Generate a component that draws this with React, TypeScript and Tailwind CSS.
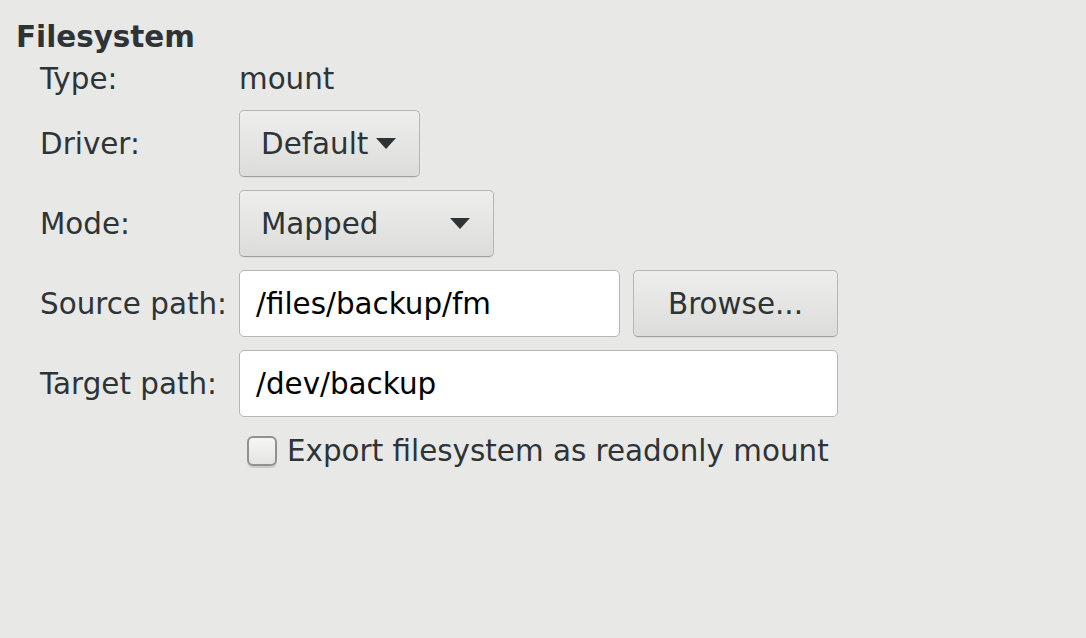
import React from "react";

function Arrow() {
  return (
    <svg width="20" height="11" viewBox="0 0 20 11" className="shrink-0">
      <path d="M0 0 L20 0 L10 11 Z" fill="#2e3436" />
    </svg>
  );
}

const btn =
  "flex items-center h-[67px] rounded-[5px] border border-[#b6b6b3] border-b-[#a1a19e] bg-gradient-to-b from-[#eeeeec] to-[#dcdcda] shadow-[0_1px_0_rgba(0,0,0,0.06)] text-[#2e3436]";

function Row({ label, children }: { label: string; children: React.ReactNode }) {
  return (
    <div className="flex items-center">
      <div className="w-[199px] shrink-0 text-[#2e3436]">{label}</div>
      {children}
    </div>
  );
}

export default function App() {
  return (
    <div
      className="w-[1086px] h-[638px] bg-[#e8e8e7] pt-[19px] pl-[16px] text-[29.4px] leading-[36px] text-[#2e3436]"
      style={{ fontFamily: '"DejaVu Sans", sans-serif' }}
    >
      <div className="font-bold h-[36px]">Filesystem</div>
      <div className="pl-[24px]">
        <div className="mt-[6px]">
          <Row label="Type:">
            <span>mount</span>
          </Row>
        </div>
        <div className="mt-[13px] flex flex-col gap-[13px]">
          <Row label="Driver:">
            <div className={`${btn} w-[181px] pl-[21px] pr-[23px] justify-between`}>
              <span>Default</span>
              <Arrow />
            </div>
          </Row>
          <Row label="Mode:">
            <div className={`${btn} w-[255px] pl-[21px] pr-[23px] justify-between`}>
              <span>Mapped</span>
              <Arrow />
            </div>
          </Row>
          <Row label="Source path:">
            <div className="flex items-center h-[67px] w-[381px] rounded-[5px] border border-[#b6b6b3] bg-white pl-[16px] text-black">
              /files/backup/fm
            </div>
            <div className={`${btn} ml-[13px] w-[205px] justify-center`}>Browse...</div>
          </Row>
          <Row label="Target path:">
            <div className="flex items-center h-[67px] w-[599px] rounded-[5px] border border-[#b6b6b3] bg-white pl-[16px] text-black">
              /dev/backup
            </div>
          </Row>
        </div>
        <div className="mt-[16px] flex items-center pl-[207px]">
          <div className="w-[30px] h-[30px] rounded-[6px] border-[2px] border-[#8f9291] bg-gradient-to-b from-[#f6f6f5] to-[#e4e4e2] shadow-[0_2px_0_rgba(0,0,0,0.12)]" />
          <span className="ml-[10px]">Export filesystem as readonly mount</span>
        </div>
      </div>
    </div>
  );
}
